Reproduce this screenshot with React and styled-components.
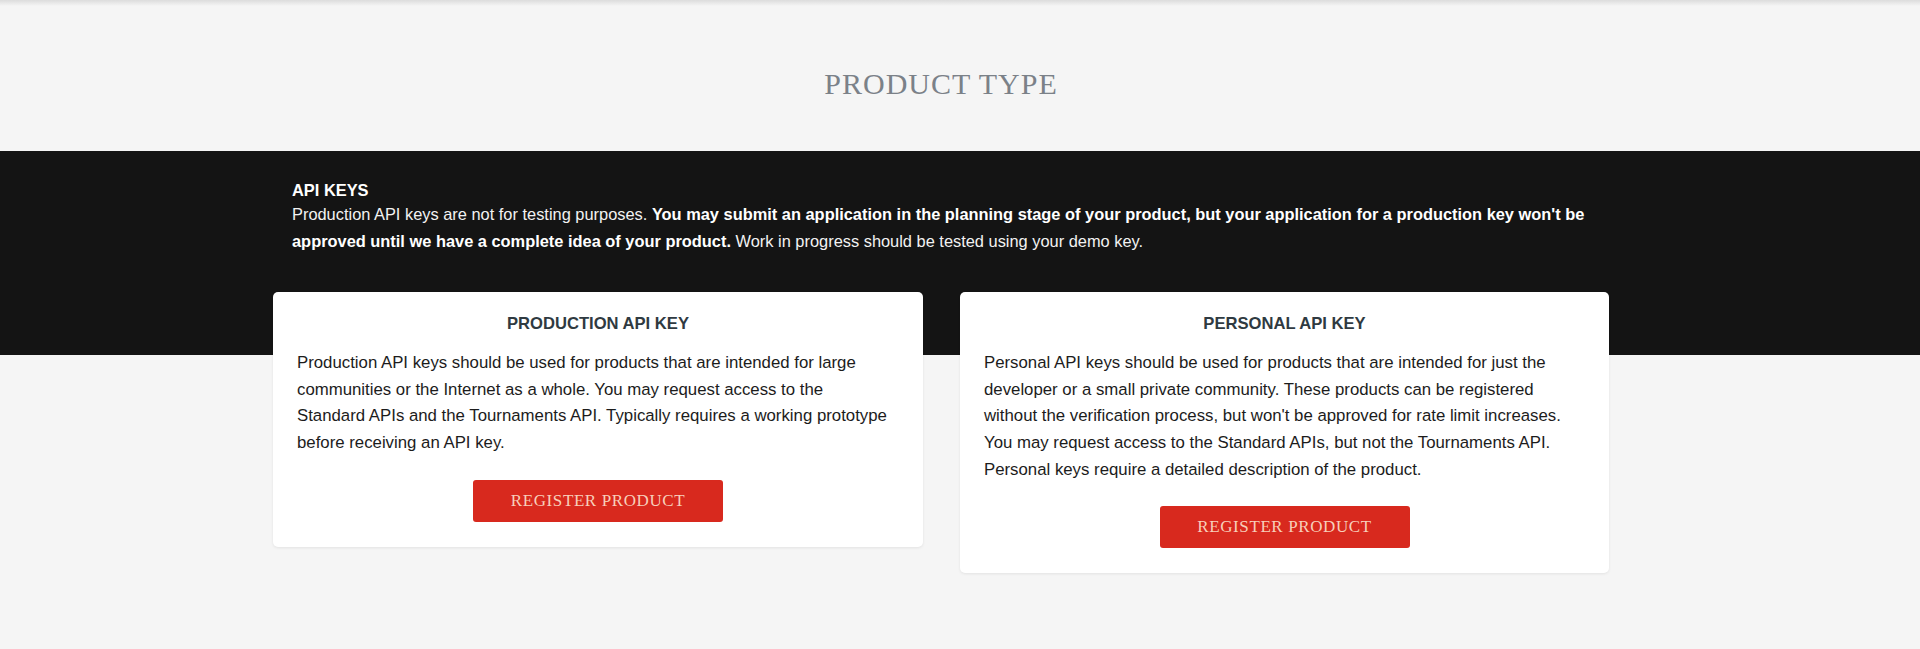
import React from 'react'
import styled, { createGlobalStyle } from 'styled-components'

const GlobalStyle = createGlobalStyle`
  html, body {
    margin: 0;
    padding: 0;
    background: #f5f5f5;
  }
  body {
    font-family: "Liberation Sans", Arial, sans-serif;
    -webkit-font-smoothing: antialiased;
  }
  * { box-sizing: border-box; }
`;

const Page = styled.div`
  min-height: 100vh;
  background: #f5f5f5;
`;

const TopShade = styled.div`
  height: 6px;
  background: linear-gradient(to bottom, #dcdcdc, #f5f5f5);
`;

const Heading = styled.h1`
  margin: 0;
  padding: 60px 38px 49px 0;
  text-align: center;
  font-family: "Liberation Serif", "DejaVu Serif", serif;
  font-weight: 400;
  font-size: 30px;
  line-height: 36px;
  letter-spacing: 1px;
  color: #7b8188;
`;

const Band = styled.section`
  padding: 28px 38px 0 0;
  background: linear-gradient(to bottom, #141414 204px, transparent 204px);
`;

const Container = styled.div`
  width: 1336px;
  margin: 0 auto;
`;

const Intro = styled.div`
  padding: 0 19px;
  color: #f2f2f2;
  margin-bottom: 37px;
`;

const IntroTitle = styled.h2`
  margin: 0;
  font-size: 16.4px;
  line-height: 22px;
  font-weight: 700;
  color: #ffffff;
`;

const IntroText = styled.p`
  margin: 0;
  font-size: 16.4px;
  line-height: 27px;
  white-space: nowrap;

  strong {
    font-weight: 700;
    color: #ffffff;
  }
`;

const Cards = styled.div`
  display: flex;
  align-items: flex-start;
  gap: 37px;
`;

const Card = styled.div`
  flex: 0 0 ${(props) => props.width}px;
  background: #ffffff;
  border-radius: 5px;
  box-shadow: 0 1px 3px rgba(0, 0, 0, 0.08);
  padding: 20px 24px 25px;
  display: flex;
  flex-direction: column;
  align-items: center;
`;

const CardTitle = styled.h3`
  margin: 0 0 14px;
  font-size: 16.6px;
  line-height: 24px;
  font-weight: 700;
  color: #2f3a41;
  text-align: center;
`;

const CardText = styled.p`
  margin: 0 0 23px;
  align-self: stretch;
  font-size: 16.8px;
  line-height: 26.67px;
  color: #1c1c1c;
  white-space: nowrap;
`;

const RegisterButton = styled.button`
  width: 250px;
  height: 42px;
  border: none;
  border-radius: 3px;
  background: #d8291e;
  color: #f7cfbb;
  font-family: "Liberation Serif", "DejaVu Serif", serif;
  font-size: 17px;
  letter-spacing: 0.6px;
  cursor: pointer;
`;

const products = [
  {
    title: 'PRODUCTION API KEY',
    width: 650,
    lines: [
      'Production API keys should be used for products that are intended for large',
      'communities or the Internet as a whole. You may request access to the',
      'Standard APIs and the Tournaments API. Typically requires a working prototype',
      'before receiving an API key.',
    ],
  },
  {
    title: 'PERSONAL API KEY',
    width: 649,
    lines: [
      'Personal API keys should be used for products that are intended for just the',
      'developer or a small private community. These products can be registered',
      "without the verification process, but won't be approved for rate limit increases.",
      'You may request access to the Standard APIs, but not the Tournaments API.',
      'Personal keys require a detailed description of the product.',
    ],
  },
];

const ProductCard = ({ product }) => (
  <Card width={product.width}>
    <CardTitle>{product.title}</CardTitle>
    <CardText>
      {product.lines.map((line, i) => (
        <React.Fragment key={i}>
          {line}
          {i < product.lines.length - 1 && <br />}
        </React.Fragment>
      ))}
    </CardText>
    <RegisterButton>REGISTER PRODUCT</RegisterButton>
  </Card>
);

const App = () => {
  return (
    <Page>
      <GlobalStyle />
      <TopShade />
      <Heading>PRODUCT TYPE</Heading>
      <Band>
        <Container>
          <Intro>
            <IntroTitle>API KEYS</IntroTitle>
            <IntroText>
              Production API keys are not for testing purposes.{' '}
              <strong>
                You may submit an application in the planning stage of your product, but your
                application for a production key won't be
              </strong>
              <br />
              <strong>approved until we have a complete idea of your product.</strong> Work in
              progress should be tested using your demo key.
            </IntroText>
          </Intro>
          <Cards>
            {products.map((p) => (
              <ProductCard key={p.title} product={p} />
            ))}
          </Cards>
        </Container>
      </Band>
    </Page>
  );
};

export default App;
